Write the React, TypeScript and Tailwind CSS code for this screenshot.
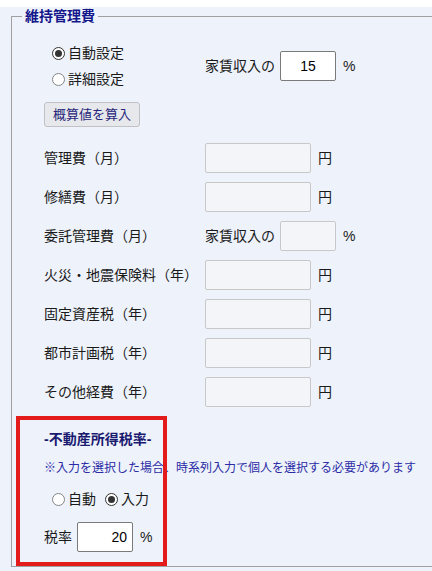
import React from 'react';

const font = { fontFamily: '"Liberation Sans", "Noto Sans CJK JP", sans-serif' };

function Radio({ checked }: { checked?: boolean }) {
    return (
        <span
            className={`w-[13px] h-[13px] rounded-full border bg-white flex items-center justify-center flex-shrink-0 ${
                checked ? 'border-[#333]' : 'border-[#858585]'
            }`}
        >
            {checked && <span className="w-[7px] h-[7px] rounded-full bg-[#333]" />}
        </span>
    );
}

function CostRow({ label, unit = '円' }: { label: string; unit?: string }) {
    return (
        <div className="flex items-center h-[30px]">
            <span className="w-[161px] text-[14px] leading-[20px] text-[#1a1a1a]">{label}</span>
            <input
                disabled
                className="w-[106px] h-[30px] bg-[#f3f5f9] border border-[#c8c8c8] rounded-[2px]"
            />
            <span className="ml-[7px] text-[14px] leading-[20px] text-[#1a1a1a]">{unit}</span>
        </div>
    );
}

export default function App() {
    return (
        <div className="w-[432px] h-[571px] bg-white overflow-hidden" style={font}>
            <div className="mt-[7px] h-[564px] bg-[#eef3fb]">
                <fieldset className="ml-[11px] w-[460px] border border-[#a0a0a0] px-0 pb-0">
                    <legend className="ml-[10px] px-[3px] text-[14px] leading-[18px] font-bold text-[#14168c]">
                        維持管理費
                    </legend>

                    <div className="pl-[32px] pt-[15px]">
                        {/* 自動 / 詳細 */}
                        <div className="flex items-center">
                            <div className="w-[161px] flex flex-col pl-[8px]">
                                <label className="flex items-center h-[26px] gap-[3px] text-[14px] text-[#1a1a1a]">
                                    <Radio checked />
                                    自動設定
                                </label>
                                <label className="flex items-center h-[26px] gap-[3px] text-[14px] text-[#1a1a1a]">
                                    <Radio />
                                    詳細設定
                                </label>
                            </div>
                            <div className="flex items-center">
                                <span className="w-[75px] text-[14px] leading-[20px] text-[#1a1a1a]">家賃収入の</span>
                                <input
                                    readOnly
                                    value="15"
                                    className="w-[56px] h-[30px] bg-white border border-[#7a7a7a] rounded-[2px] text-center text-[14px] text-black"
                                />
                                <span className="ml-[7px] text-[14px] text-[#1a1a1a]">%</span>
                            </div>
                        </div>

                        <button className="mt-[10px] w-[96px] h-[25px] bg-[#e7e8ec] border border-[#c2c2c6] rounded-[3px] text-[13px] text-[#26267a]">
                            概算値を算入
                        </button>

                        {/* 費用一覧 */}
                        <div className="mt-[16px] flex flex-col gap-[9px]">
                            <CostRow label="管理費（月）" />
                            <CostRow label="修繕費（月）" />
                            <div className="flex items-center h-[30px]">
                                <span className="w-[161px] text-[14px] leading-[20px] text-[#1a1a1a]">委託管理費（月）</span>
                                <span className="w-[75px] text-[14px] leading-[20px] text-[#1a1a1a]">家賃収入の</span>
                                <input
                                    disabled
                                    className="w-[56px] h-[30px] bg-[#f3f5f9] border border-[#c8c8c8] rounded-[2px]"
                                />
                                <span className="ml-[7px] text-[14px] text-[#1a1a1a]">%</span>
                            </div>
                            <CostRow label="火災・地震保険料（年）" />
                            <CostRow label="固定資産税（年）" />
                            <CostRow label="都市計画税（年）" />
                            <CostRow label="その他経費（年）" />
                        </div>
                    </div>

                    {/* 不動産所得税率 */}
                    <section className="relative mt-[9px] pl-[32px] pt-[12px] pb-[14px]">
                        <div className="h-[22px] flex items-center text-[14px] font-bold text-[#1a1a70]">-不動産所得税率-</div>
                        <div className="mt-[9px] h-[18px] flex items-center text-[12px] whitespace-nowrap text-[#2b2ba6]">
                            ※入力を選択した場合、時系列入力で個人を選択する必要があります
                        </div>
                        <div className="mt-[11px] h-[22px] pl-[8px] flex items-center text-[14px] text-[#1a1a1a]">
                            <label className="flex items-center gap-[3px]">
                                <Radio />
                                自動
                            </label>
                            <label className="ml-[9px] flex items-center gap-[3px]">
                                <Radio checked />
                                入力
                            </label>
                        </div>
                        <div className="mt-[12px] h-[30px] flex items-center">
                            <span className="w-[33px] text-[14px] text-[#1a1a1a]">税率</span>
                            <input
                                readOnly
                                value="20"
                                className="w-[56px] h-[30px] bg-white border border-[#7a7a7a] rounded-[2px] text-right pr-[5px] text-[14px] text-black"
                            />
                            <span className="ml-[7px] text-[14px] text-[#1a1a1a]">%</span>
                        </div>
                        {/* annotation frame */}
                        <div className="absolute left-[4px] top-0 w-[151px] h-[150px] border-4 border-[#e31b1b] pointer-events-none" />
                    </section>
                </fieldset>
            </div>
        </div>
    );
}
